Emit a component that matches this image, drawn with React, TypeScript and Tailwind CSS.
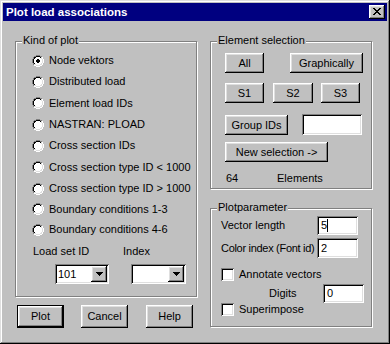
import React from "react";

const RAISED =
  "bg-[#c0c0c0] shadow-[inset_-1px_-1px_#000,inset_1px_1px_#fff,inset_-2px_-2px_#808080,inset_2px_2px_#dfdfdf]";
const SUNKEN =
  "bg-white shadow-[inset_1px_1px_#808080,inset_-1px_-1px_#fff,inset_2px_2px_#000,inset_-2px_-2px_#dfdfdf]";
const GROUP =
  "relative border border-[#808080] shadow-[inset_1px_1px_#fff,1px_1px_#fff]";

type P = [number, number];

const OUTER: P[] = [
  [4, 0], [5, 0], [6, 0], [7, 0], [2, 1], [3, 1], [8, 1], [9, 1], [1, 2], [10, 2], [1, 3], [10, 3],
  [0, 4], [11, 4], [0, 5], [11, 5], [0, 6], [11, 6], [0, 7], [11, 7], [1, 8], [10, 8], [1, 9], [10, 9],
  [2, 10], [3, 10], [8, 10], [9, 10], [4, 11], [5, 11], [6, 11], [7, 11],
];
const INNER: P[] = [
  [4, 1], [5, 1], [6, 1], [7, 1], [2, 2], [3, 2], [8, 2], [9, 2], [2, 3], [9, 3], [1, 4], [10, 4],
  [1, 5], [10, 5], [1, 6], [10, 6], [1, 7], [10, 7], [2, 8], [9, 8], [2, 9], [3, 9], [8, 9], [9, 9],
  [4, 10], [5, 10], [6, 10], [7, 10],
];
const FILL: [number, number, number][] = [
  [2, 4, 7], [3, 3, 8], [4, 2, 9], [5, 2, 9], [6, 2, 9], [7, 2, 9], [8, 3, 8], [9, 4, 7],
];

function Radio({ checked }: { checked?: boolean }) {
  return (
    <svg width="12" height="12" viewBox="0 0 12 12" shapeRendering="crispEdges" className="shrink-0">
      {FILL.map(([y, a, b]) => (
        <rect key={"f" + y} x={a} y={y} width={b - a + 1} height={1} fill="#fff" />
      ))}
      {OUTER.map(([x, y]) => (
        <rect key={"o" + x + "-" + y} x={x} y={y} width={1} height={1} fill={x + y <= 10 ? "#808080" : "#fff"} />
      ))}
      {INNER.map(([x, y]) => (
        <rect key={"i" + x + "-" + y} x={x} y={y} width={1} height={1} fill={x + y <= 10 ? "#000" : "#dfdfdf"} />
      ))}
      {checked && (
        <g fill="#000">
          <rect x={5} y={4} width={2} height={1} />
          <rect x={4} y={5} width={4} height={2} />
          <rect x={5} y={7} width={2} height={1} />
        </g>
      )}
    </svg>
  );
}

function Checkbox() {
  return <div className={"w-[13px] h-[13px] shrink-0 " + SUNKEN} />;
}

function Arrow() {
  return (
    <svg width="7" height="4" viewBox="0 0 7 4" shapeRendering="crispEdges">
      <rect x={0} y={0} width={7} height={1} fill="#000" />
      <rect x={1} y={1} width={5} height={1} fill="#000" />
      <rect x={2} y={2} width={3} height={1} fill="#000" />
      <rect x={3} y={3} width={1} height={1} fill="#000" />
    </svg>
  );
}

function Combo({ value, className }: { value: string; className: string }) {
  return (
    <div className={"flex p-[2px] " + SUNKEN + " " + className}>
      <div className="flex-1 pl-[1px] flex items-center">{value}</div>
      <div className={"w-[16px] h-full flex items-center justify-center " + RAISED}>
        <Arrow />
      </div>
    </div>
  );
}

function Field({ children, className }: { children?: React.ReactNode; className: string }) {
  return <div className={"flex items-center px-[4px] " + SUNKEN + " " + className}>{children}</div>;
}

function Btn({ children, className }: { children: React.ReactNode; className: string }) {
  return <div className={"flex items-center justify-center whitespace-nowrap " + RAISED + " " + className}>{children}</div>;
}

function CloseX() {
  const rows: [number, number[]][] = [
    [0, [0, 1, 6, 7]],
    [1, [1, 2, 5, 6]],
    [2, [2, 3, 4, 5]],
    [3, [3, 4]],
    [4, [2, 3, 4, 5]],
    [5, [1, 2, 5, 6]],
    [6, [0, 1, 6, 7]],
  ];
  return (
    <svg width="8" height="7" viewBox="0 0 8 7" shapeRendering="crispEdges">
      {rows.map(([y, xs]) =>
        xs.map((x) => <rect key={x + "-" + y} x={x} y={y} width={1} height={1} fill="#000" />)
      )}
    </svg>
  );
}

const RADIOS: { label: string; h: string; checked?: boolean }[] = [
  { label: "Node vektors", h: "h-[21px]", checked: true },
  { label: "Distributed load", h: "h-[21px]" },
  { label: "Element load IDs", h: "h-[22px]" },
  { label: "NASTRAN: PLOAD", h: "h-[21px]" },
  { label: "Cross section IDs", h: "h-[21px]" },
  { label: "Cross section type ID < 1000", h: "h-[22px]" },
  { label: "Cross section type ID > 1000", h: "h-[21px]" },
  { label: "Boundary conditions 1-3", h: "h-[20px]" },
  { label: "Boundary conditions 4-6", h: "h-[21px]" },
];

export default function App() {
  return (
    <div className="w-[390px] h-[344px] bg-[#c0c0c0] p-[3px] shadow-[inset_-1px_-1px_#000,inset_1px_1px_#dfdfdf,inset_-2px_-2px_#808080,inset_2px_2px_#fff] text-[11px] leading-[13px] text-black font-['Liberation_Sans',Arial,sans-serif] whitespace-nowrap select-none overflow-hidden">
      {/* title bar */}
      <div className="h-[18px] bg-[#000080] flex items-center justify-between pl-[3px] pr-[2px]">
        <span className="text-white font-bold text-[11.5px]">Plot load associations</span>
        <div className={"w-[16px] h-[14px] flex items-start justify-start pl-[4px] pt-[3px] " + RAISED}>
          <CloseX />
        </div>
      </div>

      <div className="flex pl-[12px] pt-[20px]">
        {/* left column */}
        <div className="flex flex-col w-[183px]">
          <div className={GROUP + " w-[182px] h-[256px]"}>
            <span className="absolute left-[6px] top-[-8px] px-[1px] bg-[#c0c0c0]">Kind of plot</span>
            <div className="flex flex-col pt-[8px] pl-[16px]">
              {RADIOS.map((r) => (
                <div key={r.label} className={"flex items-center gap-[5px] " + r.h}>
                  <Radio checked={r.checked} />
                  <span>{r.label}</span>
                </div>
              ))}
            </div>
            <div className="flex mt-[5px] pl-[17px]">
              <div className="flex flex-col w-[90px]">
                <span>Load set ID</span>
                <Combo value="101" className="ml-[22px] mt-[6px] w-[54px] h-[20px]" />
              </div>
              <div className="flex flex-col">
                <span>Index</span>
                <Combo value="" className="ml-[8px] mt-[6px] w-[55px] h-[20px]" />
              </div>
            </div>
          </div>
          <div className="flex mt-[8px] pl-[2px]">
            <div className="w-[47px] h-[23px] border border-black">
              <Btn className="w-full h-full">Plot</Btn>
            </div>
            <Btn className="ml-[17px] w-[47px] h-[23px]">Cancel</Btn>
            <Btn className="ml-[18px] w-[47px] h-[23px]">Help</Btn>
          </div>
        </div>

        {/* right column */}
        <div className="flex flex-col ml-[12px]">
          <div className={GROUP + " w-[162px] h-[148px]"}>
            <span className="absolute left-[6px] top-[-8px] px-[1px] bg-[#c0c0c0]">Element selection</span>
            <div className="flex flex-col pl-[14px] pt-[11px]">
              <div className="flex">
                <Btn className="w-[39px] h-[20px]">All</Btn>
                <Btn className="ml-[26px] w-[73px] h-[20px]">Graphically</Btn>
              </div>
              <div className="flex mt-[10px]">
                <Btn className="w-[39px] h-[20px]">S1</Btn>
                <Btn className="ml-[9px] w-[40px] h-[20px]">S2</Btn>
                <Btn className="ml-[8px] w-[39px] h-[20px]">S3</Btn>
              </div>
              <div className="flex items-end mt-[11px]">
                <Btn className="w-[63px] h-[20px]">Group IDs</Btn>
                <Field className="ml-[14px] w-[60px] h-[21px]" />
              </div>
              <div className="flex mt-[7px]">
                <Btn className="w-[103px] h-[20px]">New selection -&gt;</Btn>
              </div>
              <div className="flex mt-[10px]">
                <span className="w-[52px] pl-[1px]">64</span>
                <span>Elements</span>
              </div>
            </div>
          </div>

          <div className={GROUP + " mt-[19px] w-[162px] h-[119px]"}>
            <span className="absolute left-[6px] top-[-8px] px-[1px] bg-[#c0c0c0]">Plotparameter</span>
            <div className="flex flex-col pl-[10px] pt-[7px]">
              <div className="flex items-center h-[19px]">
                <span className="w-[96px]">Vector length</span>
                <Field className="w-[41px] h-[19px]">
                  <span>5</span>
                  <span className="inline-block w-[1px] h-[13px] bg-black" />
                </Field>
              </div>
              <div className="flex items-center h-[20px] mt-[3px]">
                <span className="w-[96px] tracking-[-0.3px]">Color index (Font id)</span>
                <Field className="w-[41px] h-[20px]">2</Field>
              </div>
              <div className="flex items-center gap-[5px] h-[13px] mt-[10px]">
                <Checkbox />
                <span>Annotate vectors</span>
              </div>
              <div className="flex items-center h-[19px] mt-[3px] pl-[48px]">
                <span className="w-[54px]">Digits</span>
                <Field className="w-[41px] h-[19px]">0</Field>
              </div>
              <div className="flex items-center gap-[5px] h-[13px]">
                <Checkbox />
                <span>Superimpose</span>
              </div>
            </div>
          </div>
        </div>
      </div>
    </div>
  );
}
